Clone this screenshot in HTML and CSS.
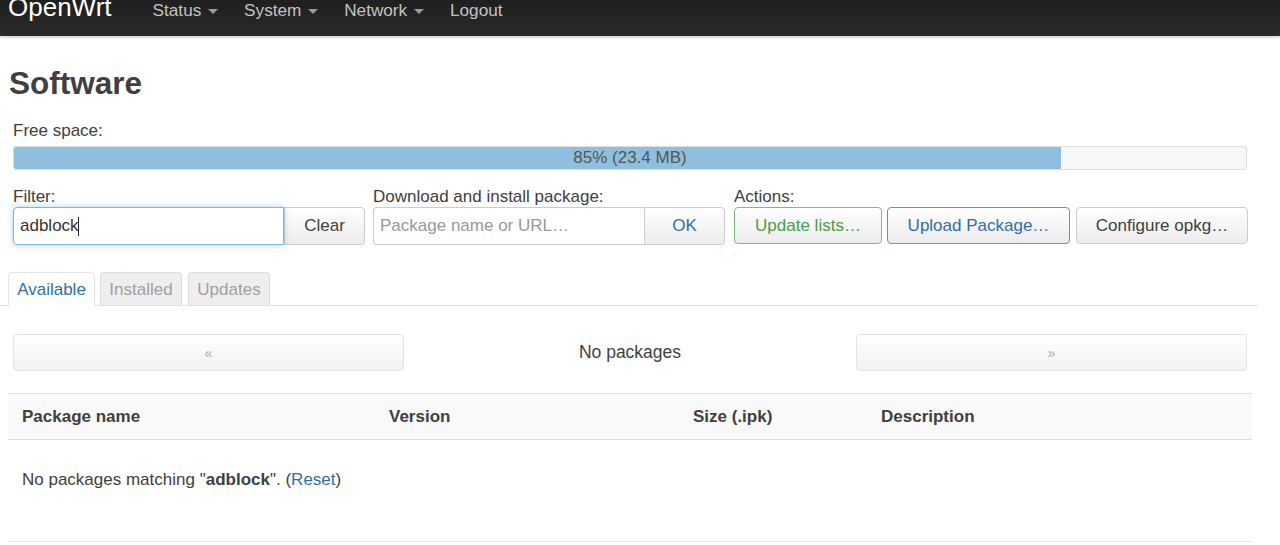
FILE: index.html
```html
<!DOCTYPE html>
<html lang="en">
<head>
    <meta charset="UTF-8">
    <title>Software - OpenWrt</title>
    <link rel="stylesheet" href="styles.css">
</head>
<body>

<header class="navbar">
    <div class="navbar-inner">
        <a class="brand" href="#">OpenWrt</a>
        <ul class="nav">
            <li><a href="#">Status <span class="caret"></span></a></li>
            <li><a href="#">System <span class="caret"></span></a></li>
            <li><a href="#">Network <span class="caret"></span></a></li>
            <li><a href="#">Logout</a></li>
        </ul>
    </div>
</header>

<div id="maincontent">
    <h1>Software</h1>

    <div class="controls">
        <div class="free-space">
            <label>Free space:</label>
            <div class="progress">
                <div class="progress-bar" style="width: 85%"></div>
                <span class="progress-text">85% (23.4 MB)</span>
            </div>
        </div>

        <div class="control-row">
            <div class="control-group group-filter">
                <label>Filter:</label>
                <div class="input-group">
                    <input type="text" class="focused" value="adblock"><span class="caret-mark"></span>
                    <button class="btn">Clear</button>
                </div>
            </div>
            <div class="control-group group-download">
                <label>Download and install package:</label>
                <div class="input-group">
                    <input type="text" placeholder="Package name or URL…">
                    <button class="btn btn-blue-text">OK</button>
                </div>
            </div>
            <div class="control-group group-actions">
                <label>Actions:</label>
                <div class="actions">
                    <button class="btn btn-positive">Update lists…</button>
                    <button class="btn btn-action">Upload Package…</button>
                    <button class="btn btn-neutral">Configure opkg…</button>
                </div>
            </div>
        </div>
    </div>

    <ul class="tabs">
        <li class="active tab-available"><a href="#">Available</a></li>
        <li class="tab-installed"><a href="#">Installed</a></li>
        <li class="tab-updates"><a href="#">Updates</a></li>
    </ul>

    <div class="pager">
        <button class="btn pager-btn">&laquo;</button>
        <div class="pager-info">No packages</div>
        <button class="btn pager-btn">&raquo;</button>
    </div>

    <table class="table">
        <thead>
            <tr>
                <th class="col-name">Package name</th>
                <th class="col-version">Version</th>
                <th class="col-size">Size (.ipk)</th>
                <th>Description</th>
            </tr>
        </thead>
        <tbody>
            <tr class="placeholder">
                <td colspan="4">No packages matching "<strong>adblock</strong>". (<a href="#">Reset</a>)</td>
            </tr>
        </tbody>
    </table>
</div>

</body>
</html>
```

FILE: styles.css
```css
body {
    margin: 0;
    font-family: "Liberation Sans", Arial, sans-serif;
    font-size: 17px;
    color: #404040;
    background: #fff;
    overflow: hidden;
}
a {
    color: #2f6fab;
    text-decoration: none;
}
.navbar {
    height: 36px;
    overflow: hidden;
    background: linear-gradient(#1f1f1f, #2a2a2a);
    box-shadow: 0 1px 3px rgba(0, 0, 0, 0.25);
}
.navbar-inner {
    display: flex;
    align-items: baseline;
    margin-top: -8px;
    padding-left: 8px;
}
.brand {
    color: #fff;
    font-size: 26px;
    line-height: 30px;
    margin-right: 41px;
}
.nav {
    display: flex;
    list-style: none;
    margin: 0;
    padding: 0;
}
.nav li {
    margin-right: 26px;
}
.nav a {
    color: #c2c2c2;
    font-size: 17.2px;
}
.caret {
    display: inline-block;
    width: 0;
    height: 0;
    border-left: 5px solid transparent;
    border-right: 5px solid transparent;
    border-top: 5px solid #999;
    vertical-align: middle;
    margin-left: 2px;
}
#maincontent {
    padding: 0 28px 0 8px;
}
h1 {
    font-size: 31.5px;
    line-height: 36px;
    margin: 29px 0 0 1px;
    color: #404040;
}
.controls {
    padding: 0 5px;
}
label {
    display: block;
    line-height: 20px;
}
.free-space label {
    margin-top: 20px;
}
.progress {
    position: relative;
    height: 24px;
    box-sizing: border-box;
    margin-top: 5px;
    border: 1px solid #ddd;
    border-radius: 3px;
    background: #f7f7f7;
    overflow: hidden;
}
.progress-bar {
    height: 100%;
    background: #8ebfdf;
}
.progress-text {
    position: absolute;
    left: 0;
    right: 0;
    top: 0;
    line-height: 22px;
    text-align: center;
    color: #555;
}
.control-row {
    display: flex;
    margin-top: 17px;
}
.group-filter, .group-download {
    width: 352px;
}
.group-filter {
    margin-right: 8px;
}
.group-download {
    margin-right: 9px;
}
.group-actions {
    flex: 1;
}
.input-group {
    display: flex;
    position: relative;
}
input {
    width: 271px;
    height: 38px;
    box-sizing: border-box;
    border: 1px solid #ccc;
    border-right: none;
    border-radius: 4px 0 0 4px;
    padding: 0 6px;
    font-family: inherit;
    font-size: 17px;
    color: #333;
    outline: none;
}
input::placeholder {
    color: #999;
}
input.focused {
    border: 1px solid #7db5e8;
    box-shadow: 0 0 6px rgba(102, 175, 233, 0.55);
    position: relative;
    z-index: 1;
}
.caret-mark {
    position: absolute;
    left: 65px;
    top: 10px;
    width: 1px;
    height: 19px;
    background: #222;
    z-index: 2;
}
.btn {
    height: 38px;
    box-sizing: border-box;
    border: 1px solid #ccc;
    border-radius: 4px;
    background: linear-gradient(#fff, #ececec);
    font-family: inherit;
    font-size: 17px;
    color: #404040;
    padding: 0 10px;
    cursor: pointer;
}
.input-group .btn {
    width: 81px;
    border-radius: 0 4px 4px 0;
}
.btn-blue-text {
    color: #2f6fab;
}
.actions {
    display: flex;
    gap: 5px;
}
.actions .btn {
    height: 37px;
}
.btn-positive {
    width: 148px;
    border-color: #7dbd7d;
    color: #4b9b4b;
}
.btn-action {
    width: 183px;
    border-color: #5b95cf;
    color: #2f6fab;
}
.btn-neutral {
    width: 172px;
    margin-left: 1px;
}
.tabs {
    display: flex;
    list-style: none;
    margin: 27px 0 0 -8px;
    padding: 0 0 0 8px;
    width: 1250px;
    border-bottom: 1px solid #e2e2e2;
    height: 33px;
}
.tabs li {
    border: 1px solid #ddd;
    border-bottom: none;
    border-radius: 4px 4px 0 0;
    background: #eee;
    height: 33px;
    box-sizing: border-box;
    text-align: center;
}
.tab-available {
    width: 87px;
    margin-right: 5px;
}
.tab-installed {
    width: 82px;
    margin-right: 6px;
}
.tab-updates {
    width: 82px;
}
.tabs li a {
    display: block;
    line-height: 33px;
    color: #a0a0a0;
    font-size: 17px;
}
.tabs li.active {
    background: #fff;
    height: 34px;
    border-color: #e5e5e5;
}
.tabs li.active a {
    color: #2f6fab;
}
.pager {
    display: flex;
    align-items: center;
    margin: 28px 5px 0;
}
.pager-btn {
    width: 391px;
    height: 37px;
    border-color: #e3e3e3;
    background: linear-gradient(#fff, #f2f2f2);
    color: #aaa;
    font-size: 14px;
}
.pager-info {
    flex: 1;
    text-align: center;
    font-size: 17.5px;
}
.table {
    width: 1244px;
    border-collapse: collapse;
    margin-top: 22px;
}
.table th {
    text-align: left;
    font-size: 17px;
    height: 46px;
    box-sizing: border-box;
    padding: 0 14px;
    background: #f9f9f9;
    border-top: 1px solid #e2e2e2;
    border-bottom: 1px solid #ddd;
}
.col-name {
    width: 367px;
}
.col-version {
    width: 304px;
}
.col-size {
    width: 188px;
}
.table td {
    padding: 30px 14px 51px;
    font-size: 17px;
    border-bottom: 1px solid #e5e5e5;
}
```
